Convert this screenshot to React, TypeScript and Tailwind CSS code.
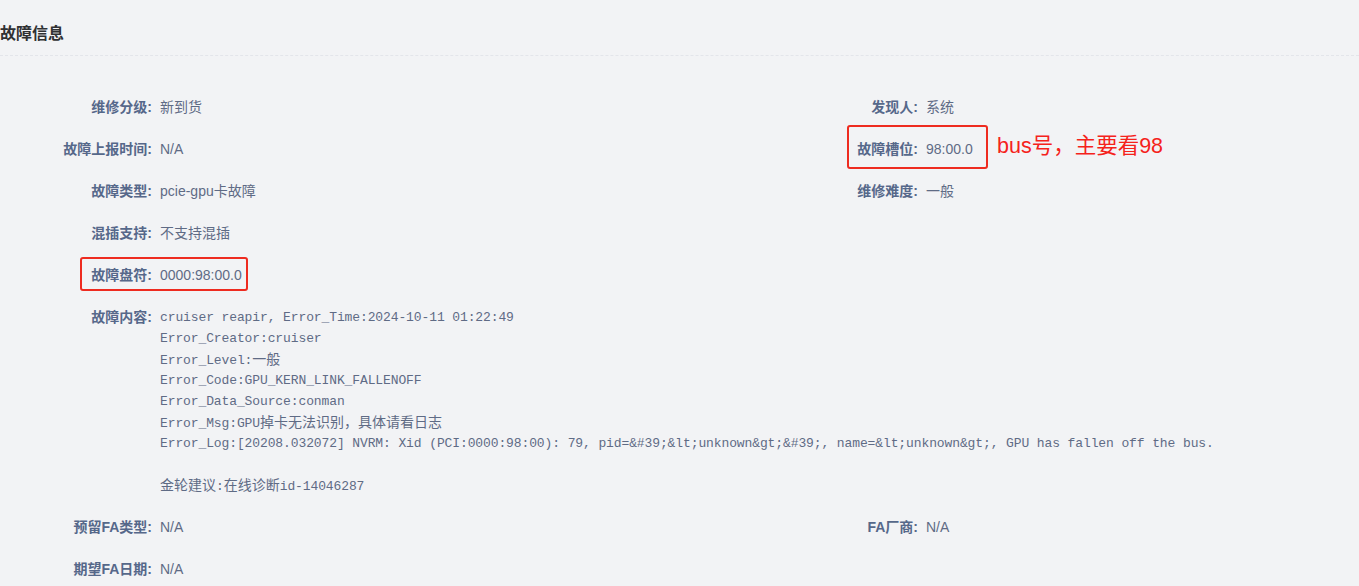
import React from 'react';

const sans = "font-['Liberation_Sans','Noto_Sans_CJK_SC',sans-serif]";
const mono = "font-['Liberation_Mono','Noto_Sans_CJK_SC',monospace]";

type Item = { label: string; value: React.ReactNode };

function Field({ label, value }: Item) {
  return (
    <div className="flex items-start py-[10.5px] leading-[21px]">
      <div className="w-[160px] shrink-0 pr-[8px] text-right text-[14px] font-bold text-[#56688a]">{label}</div>
      <div className="text-[14px] text-[#5f6b85]">{value}</div>
    </div>
  );
}

function Cjk({ children }: { children: React.ReactNode }) {
  return <span className={`${sans} text-[14px] leading-[21px] tracking-normal`}>{children}</span>;
}

function ErrorContent() {
  return (
    <div className={`${mono} text-[13px] leading-[21px] tracking-[-0.11px] whitespace-pre text-[#5f6b85] [&>div]:h-[21px]`}>
      <div>cruiser reapir, Error_Time:2024-10-11 01:22:49</div>
      <div>Error_Creator:cruiser</div>
      <div>Error_Level:<Cjk>一般</Cjk></div>
      <div>Error_Code:GPU_KERN_LINK_FALLENOFF</div>
      <div>Error_Data_Source:conman</div>
      <div>Error_Msg:GPU<Cjk>掉卡无法识别，具体请看日志</Cjk></div>
      <div>Error_Log:[20208.032072] NVRM: Xid (PCI:0000:98:00): 79, pid=&amp;#39;&amp;lt;unknown&amp;gt;&amp;#39;, name=&amp;lt;unknown&amp;gt;, GPU has fallen off the bus.</div>
      <div>&nbsp;</div>
      <div><Cjk>金轮建议</Cjk>:<Cjk>在线诊断</Cjk>id-14046287</div>
    </div>
  );
}

export default function App() {
  return (
    <div className={`${sans} relative min-h-[586px] w-[1359px] overflow-hidden bg-[#f2f3f5]`}>
      <div className="pt-[22px] pb-[9px] text-[16px] font-bold leading-[24px] text-[#303133]">故障信息</div>
      <div className="border-t border-dashed border-[#e3e5ea]" />

      <div className="pt-[30px]">
        <div className="grid grid-cols-[766px_766px]">
          <Field label="维修分级:" value="新到货" />
          <Field label="发现人:" value="系统" />
          <Field label="故障上报时间:" value="N/A" />
          <Field label="故障槽位:" value="98:00.0" />
          <Field label="故障类型:" value="pcie-gpu卡故障" />
          <Field label="维修难度:" value="一般" />
          <Field label="混插支持:" value="不支持混插" />
          <div />
          <Field label="故障盘符:" value="0000:98:00.0" />
          <div />
        </div>
        <Field label="故障内容:" value={<ErrorContent />} />
        <div className="grid grid-cols-[766px_766px]">
          <Field label="预留FA类型:" value="N/A" />
          <Field label="FA厂商:" value="N/A" />
          <Field label="期望FA日期:" value="N/A" />
          <div />
        </div>
      </div>

      {/* annotation marks */}
      <div className="absolute left-[80px] top-[257px] h-[34px] w-[168px] rounded-[3px] border-2 border-[#ee2b20]" />
      <div className="absolute left-[847px] top-[125px] h-[44px] w-[141px] rounded-[3px] border-2 border-[#ee2b20]" />
      <div className="absolute left-[997px] top-[131px] text-[21.5px] leading-[30px] text-[#f5221b]">bus号，主要看98</div>
    </div>
  );
}
